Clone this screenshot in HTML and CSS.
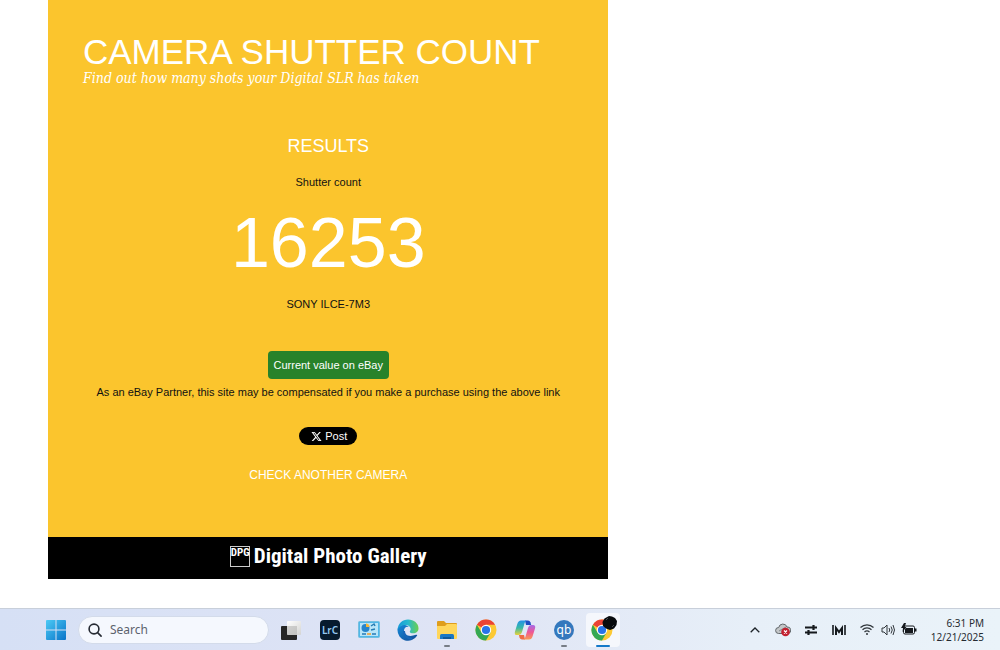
FILE: index.html
```html
<!DOCTYPE html>
<html lang="en">
<head>
<meta charset="utf-8">
<title>Camera Shutter Count</title>
<link rel="stylesheet" href="styles.css">
</head>
<body>
<main class="page">
  <div class="panel">
    <header class="heading">
      <h1 class="title">CAMERA SHUTTER COUNT</h1>
      <p class="tagline">Find out how many shots your Digital SLR has taken</p>
    </header>
    <section class="results">
      <h2 class="results-title">RESULTS</h2>
      <p class="label">Shutter count</p>
      <p class="count">16253</p>
      <p class="model">SONY ILCE-7M3</p>
      <a class="ebay" href="#ebay">Current value on eBay</a>
      <p class="note">As an eBay Partner, this site may be compensated if you make a purchase using the above link</p>
      <a class="post" href="#post">
        <svg width="11" height="11" viewBox="0 0 24 24" aria-hidden="true"><path fill="#fff" d="M18.2 2h3.4l-7.400 8.500L23 22h-6.800l-5.300-7-6.100 7H1.400l7.900-9.100L1 2h7l4.800 6.400zM17 20h1.900L7 3.900H5z"/></svg>
        <span>Post</span>
      </a>
      <a class="again" href="#again">CHECK ANOTHER CAMERA</a>
    </section>
    <footer class="brand">
      <span class="brand-mark">DPG</span>
      <span class="brand-name">Digital Photo Gallery</span>
    </footer>
  </div>
</main>
<nav class="taskbar">
  <div class="apps">
    <button class="app" aria-label="Start">
      <svg width="20" height="20" viewBox="0 0 20 20"><defs><linearGradient id="win" x1="0" y1="0" x2="1" y2="1"><stop offset="0" stop-color="#4ccaf5"/><stop offset="1" stop-color="#0873c8"/></linearGradient></defs><path fill="url(#win)" d="M0 1q0-1 1-1h8.500v9.500H0zM10.500 0H19q1 0 1 1v8.500h-9.500zM0 10.500h9.500V20H1q-1 0-1-1zM10.500 10.500H20V19q0 1-1 1h-8.500z"/></svg>
    </button>
    <label class="search">
      <svg width="14" height="14" viewBox="0 0 14 14" fill="none" stroke="#252a33" stroke-width="1.600" stroke-linecap="round"><circle cx="6" cy="6" r="4.900"/><path d="M9.600 9.600l3.500 3.500"/></svg>
      <input class="search-input" type="text" placeholder="Search" aria-label="Search">
    </label>
    <button class="app" aria-label="Task view">
      <svg width="22" height="22" viewBox="0 0 22 22"><defs><linearGradient id="tv" x1="0" y1="0" x2="1" y2="1"><stop offset="0" stop-color="#fff"/><stop offset="1" stop-color="#d4d4d2"/></linearGradient></defs><rect x="1" y="7" width="16" height="14" rx="1" fill="#262626"/><rect x="7" y="2" width="14" height="14" rx="1" fill="url(#tv)"/><path fill="#a9a9a7" d="M7 7h10v9H7z" opacity=".5"/></svg>
    </button>
    <button class="app" aria-label="Lightroom Classic"><span class="lrc">LrC</span></button>
    <button class="app" aria-label="Control panel">
      <svg width="22" height="18" viewBox="0 0 22 18"><rect x=".5" y=".5" width="21" height="16" rx="1" fill="#50b7e8" stroke="#75bfdf"/><rect x="2" y="2" width="18" height="13" fill="#b9e5f8"/><circle cx="7.500" cy="7" r="4" fill="#2685cc"/><path d="M8 6V2.500A4 4 0 0 1 11.500 6z" fill="#f7b635"/><path d="M13 5l3-2 1 2M13 9l4-1" stroke="#247cb4" fill="none" stroke-width="1.500"/><path d="M4 13h4M14 13h4" stroke="#277bb5" stroke-width="1.500"/><path d="M9 13h4" stroke="#f49c2b" stroke-width="1.500"/></svg>
    </button>
    <button class="app" aria-label="Edge">
      <svg width="22" height="22" viewBox="0 0 22 22"><defs><linearGradient id="edge1" x1="0" y1="0" x2="1" y2="0"><stop offset="0" stop-color="#1698d8"/><stop offset=".5" stop-color="#26b9cf"/><stop offset="1" stop-color="#6bd04d"/></linearGradient><linearGradient id="edge2" x1="0" y1="0" x2="1" y2="1"><stop offset="0" stop-color="#1589d8"/><stop offset="1" stop-color="#104a95"/></linearGradient></defs><path fill="url(#edge2)" d="M.500 11C1 6 8 4.500 12 8c-3-1-5 1-5 4 0 4 5 6.500 12 3.800 1-.3 1.500.2 1 .9A10.500 10.500 0 0 1 .500 11z"/><path fill="url(#edge1)" d="M.500 11C1 4.500 5.500.500 11 .500c6 0 10.500 4 10.500 8.700 0 3.200-2.400 5-5.200 5-2.600 0-3.800-1-3.500-1.800.2-.5.900-1 .9-2.100C13.700 7.500 11 6 8 6c-3.500 0-6 2-7.500 5z"/><path d="M7 12c-.3 4 3.500 8 8 8" stroke="#1766b9" fill="none" stroke-width="2"/></svg>
    </button>
    <button class="app app-open" aria-label="File Explorer">
      <svg width="22" height="20" viewBox="0 0 22 20"><path fill="#df9d1c" d="M1 2q0-1 1-1h6l2 2h10q1 0 1 1v6H1z"/><path fill="#ffd65b" d="M1 6h8l2-2h9q1 0 1 1v13q0 1-1 1H2q-1 0-1-1z"/><path fill="#1b77c5" d="M4 19v-3.500q0-1.500 1.500-1.500h11q1.500 0 1.500 1.500V19z"/><path fill="#125798" d="M7 17h8v2H7z"/></svg>
    </button>
    <button class="app" aria-label="Chrome">
      <svg width="22" height="22" viewBox="0 0 22 22"><g id="chrome"><circle cx="11" cy="11" r="10.500" fill="#fcc934"/><path fill="#ea4335" d="M11 11L1.900 5.750A10.500 10.500 0 0 1 20.100 5.750H11z"/><path fill="#34a853" d="M1.900 5.750A10.500 10.500 0 0 0 11 21.500l4.600-7.900L11 11 6.500 13.600z"/><circle cx="11" cy="11" r="5.200" fill="#fff"/><circle cx="11" cy="11" r="4.100" fill="#2874e8"/></g></svg>
    </button>
    <button class="app" aria-label="Copilot">
      <svg width="22" height="22" viewBox="0 0 22 22"><defs><linearGradient id="cop1" x1="0" y1="0" x2="0" y2="1"><stop offset="0" stop-color="#2392e8"/><stop offset=".5" stop-color="#37b9a8"/><stop offset="1" stop-color="#e7d13a"/></linearGradient><linearGradient id="cop2" x1="0" y1="0" x2="0" y2="1"><stop offset="0" stop-color="#a66be8"/><stop offset=".5" stop-color="#ef5795"/><stop offset="1" stop-color="#fa9a52"/></linearGradient></defs><path fill="#1c50c4" d="M11 1.500h3q1.800 0 2.400 1.800L17.200 6H12z"/><path fill="#ef6b45" d="M5 16h5l1 4.500H8q-1.800 0-2.400-1.800z"/><path fill="url(#cop1)" d="M7 1.500h5.500q-1.300.5-1.800 2.300L8 13q-.9 3-3.500 3H3q-3 0-2-3.600L3.300 5Q4.300 1.500 7 1.500z"/><path fill="url(#cop2)" d="M15 20.500H9.500q1.300-.5 1.800-2.300L14 9q.9-3 3.500-3H19q3 0 2 3.600L18.700 17q-1 3.500-3.700 3.500z"/></svg>
    </button>
    <button class="app app-open" aria-label="QuickBooks"><span class="qb">qb</span></button>
    <button class="app app-active" aria-label="Chrome, active window">
      <svg width="28" height="28" viewBox="0 0 28 28"><use href="#chrome" x="2" y="3"/><path fill="#090b0d" d="M20 0l3 .5 3 1.500 2 3-.5 4-2.500 3.500-4 1.500-4-1.500-3-2.500-.5-4 2-3.500z"/><path d="M17 4l2-2M23 11l2-2" stroke="#4b4e52"/></svg>
    </button>
  </div>
  <div class="tray">
    <button class="tray-icon" aria-label="Show hidden icons"><svg width="10" height="6" viewBox="0 0 10 6" fill="none" stroke="#1d2328" stroke-width="1.300"><path d="M.7 5.300L5 1l4.300 4.300"/></svg></button>
    <button class="tray-icon" aria-label="Cloud sync error"><svg width="16" height="14" viewBox="0 0 16 14"><path d="M3.500 10.500a3 3 0 0 1 .2-6A4.300 4.300 0 0 1 12 4a3 3 0 0 1 1 6.500z" fill="#c3c6c8" stroke="#62676b"/><path d="M4 8l7-4" stroke="#858a8e"/><circle cx="10.500" cy="9" r="4.300" fill="#c3202f"/><path d="M9 7.500l3 3m0-3l-3 3" stroke="#fff" stroke-width="1.200"/></svg></button>
    <button class="tray-icon" aria-label="Audio settings"><svg width="14" height="12" viewBox="0 0 14 12" stroke="#15191d" fill="none" stroke-width="2"><path d="M1 3.500h12M1 8.500h12"/><path d="M9.500 1v5M4.500 6v5" stroke-width="2.200"/></svg></button>
    <button class="tray-icon" aria-label="Monitor"><svg width="14" height="12" viewBox="0 0 14 12" fill="none" stroke="#15191d"><path d="M1 1v10M13 1v10" stroke-width="1.600"/><path d="M4 11V4l3 4 3-4v7" stroke-width="2"/></svg></button>
    <button class="system" aria-label="Network, volume and battery">
      <svg width="16" height="14" viewBox="0 0 16 14" fill="none" stroke="#30363b" stroke-width="1.200"><path d="M1.500 4.500a9.200 9.200 0 0 1 13 0M3.500 6.800a6.400 6.400 0 0 1 9 0M5.500 9a3.600 3.600 0 0 1 5 0"/><circle cx="8" cy="11" r="1" fill="#30363b" stroke="none"/></svg>
      <svg width="14" height="14" viewBox="0 0 14 14" fill="none" stroke="#30363b"><path d="M1 5h2l3-3v10L3 9H1zM8 5q1.500 2 0 4M10 3.500q2.500 3.500 0 7M12 2q3 5 0 10"/></svg>
      <svg width="16" height="14" viewBox="0 0 16 14"><rect x="2.500" y="3" width="11" height="8" rx="1.500" fill="none" stroke="#15191d"/><path fill="#15191d" d="M4 5h8v5H4zM14 5.500h1.500v3H14zM3 0L0 5h2L1.500 9 5.500 4H3.700L5 0z"/></svg>
    </button>
    <time class="clock" datetime="2025-12-21T18:31"><span>6:31 PM</span><span>12/21/2025</span></time>
  </div>
</nav>
</body>
</html>
```
FILE: styles.css
```css
* { box-sizing: border-box; }
body {
  margin: 0;
  min-height: 100vh;
  display: flex;
  flex-direction: column;
  background: #fff;
  font-family: "Liberation Sans", Arial, sans-serif;
}
h1, h2, p { margin: 0; font-weight: 400; }
a { color: #fff; text-decoration: none; }
button { border: 0; padding: 0; background: none; font: inherit; }

.page { flex: 1; padding: 0 48px 28px; }
.panel { width: 62%; background: #fbc52d; color: #111; }
.heading { padding: 34px 35px 0; color: #fff; }
.title { font-size: 35px; line-height: 36px; white-space: nowrap; }
.tagline {
  font-family: "DejaVu Serif Condensed", "DejaVu Serif", serif;
  font-size: 14px;
  line-height: 16px;
  font-style: italic;
}
.results {
  display: flex;
  flex-direction: column;
  align-items: center;
  padding: 50px 24px 54px;
  font-size: 11px;
  line-height: 16px;
  text-align: center;
}
.results-title { font-size: 18px; line-height: 20px; color: #fff; }
.label { margin-top: 18px; }
.count { margin-top: 13px; font-size: 70px; line-height: 80px; color: #fff; }
.model { margin-top: 13px; }
.ebay {
  margin-top: 39px;
  padding: 6px;
  border-radius: 4px;
  background: #28822a;
}
.note { margin-top: 5px; }
.post {
  display: flex;
  align-items: center;
  gap: 3px;
  margin-top: 27px;
  padding: 1px 10px 1px 12px;
  border-radius: 9px;
  background: #000;
}
.again { margin-top: 22px; font-size: 12px; }
.brand {
  display: flex;
  align-items: center;
  justify-content: center;
  gap: 4px;
  height: 42px;
  padding-bottom: 4px;
  background: #000;
  color: #fff;
  font-family: "Roboto Condensed", Roboto, sans-serif;
}
.brand-mark {
  width: 20px;
  height: 21px;
  border: 1px solid #ccc;
  font-size: 11px;
  font-weight: 700;
  line-height: 11px;
  text-align: center;
}
.brand-name { font-size: 21px; font-weight: 700; line-height: 28px; }

.taskbar {
  display: flex;
  justify-content: space-between;
  height: 42px;
  border-top: 1px solid #c8cfda;
  background: linear-gradient(90deg, #d6e0f5, #dfe4f5 45%, #e7eff8 75%, #eaf3f9);
  font-family: "Noto Sans", sans-serif;
}
.apps { display: flex; align-items: center; gap: 5px; padding-left: 39px; }
.app {
  position: relative;
  display: flex;
  align-items: center;
  justify-content: center;
  width: 34px;
  height: 34px;
  border-radius: 4px;
}
.search {
  display: flex;
  align-items: center;
  gap: 8px;
  width: 191px;
  height: 28px;
  padding: 0 9px;
  border: 1px solid #d3dbea;
  border-radius: 14px;
  background: #f5f8fe;
}
.search-input {
  min-width: 0;
  flex: 1;
  padding: 0;
  border: 0;
  background: none;
  font: 12px "Noto Sans", sans-serif;
}
.search-input::placeholder { color: #5c626d; opacity: 1; }
.lrc {
  width: 20px;
  border-radius: 4px;
  background: #071b2e;
  color: #94c9f2;
  font-size: 10px;
  font-weight: 600;
  line-height: 20px;
}
.qb {
  width: 20px;
  border-radius: 50%;
  background: #3478bd;
  color: #fff;
  font-size: 12px;
  line-height: 20px;
}
.app-open::after, .app-active::after {
  content: "";
  position: absolute;
  bottom: 0;
  width: 6px;
  height: 2px;
  border-radius: 2px;
  background: #777d86;
}
.app-active { background: #f5f7fc; }
.app-active::after { width: 14px; background: #1479c9; }
.tray { display: flex; align-items: center; gap: 12px; padding-right: 16px; }
.tray-icon, .system { display: flex; align-items: center; justify-content: center; }
.tray-icon { width: 16px; }
.system { gap: 6px; }
.clock {
  display: flex;
  flex-direction: column;
  align-items: flex-end;
  margin-left: 2px;
  font-size: 10px;
  line-height: 14px;
  color: #252a30;
}
```
